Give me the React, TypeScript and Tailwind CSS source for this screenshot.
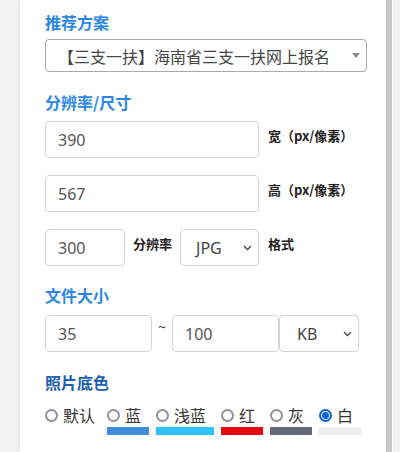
import React from "react";

const cjk = { fontFamily: '"Noto Sans CJK SC", "Noto Sans", sans-serif' };
const num = { fontFamily: '"Noto Sans", "Noto Sans CJK SC", sans-serif' };

function Chevron() {
  return (
    <svg width="9" height="6" viewBox="0 0 9 6" className="shrink-0">
      <path d="M1 1 L4.5 4.5 L8 1" fill="none" stroke="#444" strokeWidth="1.3" />
    </svg>
  );
}

function Input({ value, w }: { value: string; w: string }) {
  return (
    <div
      className={`${w} h-[37px] shrink-0 rounded-[4px] border border-[#ced4da] bg-white flex items-center pl-[12px] text-[16px] text-[#555]`}
      style={num}
    >
      {value}
    </div>
  );
}

function Sel({ value, w, textPl, chevPr }: { value: string; w: string; textPl: string; chevPr: string }) {
  return (
    <div
      className={`${w} h-[37px] shrink-0 rounded-[4px] border border-[#ced4da] bg-white flex items-center justify-between ${textPl} ${chevPr} text-[16px] text-[#444]`}
      style={num}
    >
      <span>{value}</span>
      <Chevron />
    </div>
  );
}

function Heading({ children, color, mt }: { children: React.ReactNode; color: string; mt: string }) {
  return (
    <div className={`${mt} h-[22px] leading-[22px] text-[16px] font-bold ${color}`} style={cjk}>
      {children}
    </div>
  );
}

function Label({ children }: { children: React.ReactNode }) {
  return (
    <div className="pt-[6px] text-[13px] leading-[18px] font-semibold text-[#222] whitespace-nowrap" style={cjk}>
      {children}
    </div>
  );
}

function Radio({ checked }: { checked?: boolean }) {
  if (checked) {
    return (
      <span className="w-[13px] h-[13px] rounded-full border-[2px] border-[#0b63d8] flex items-center justify-center shrink-0">
        <span className="w-[7px] h-[7px] rounded-full bg-[#0b63d8]" />
      </span>
    );
  }
  return <span className="w-[13px] h-[13px] rounded-full border-[2px] border-[#8f8f9d] shrink-0" />;
}

function ColorItem({ label, w, bar, checked }: { label: string; w: string; bar: string; checked?: boolean }) {
  return (
    <div className={`${w} flex flex-col shrink-0`}>
      <div className="flex items-center h-[24px] gap-[5px]">
        <Radio checked={checked} />
        <span className="text-[16px] leading-[24px] text-[#333]" style={cjk}>
          {label}
        </span>
      </div>
      <div className={`h-[8px] w-full ${bar}`} />
    </div>
  );
}

export default function App() {
  return (
    <div className="w-[400px] h-[452px] bg-[#f4f4f4] flex overflow-hidden">
      <div className="w-[20px] shrink-0" />
      <div className="w-[366px] shrink-0 bg-white shadow-[-2px_0_3px_rgba(0,0,0,0.06)] pl-[25px] pr-[19px] pt-[11px]">
        <Heading color="text-[#2b87e3]" mt="mt-0">推荐方案</Heading>
        <div
          className="mt-[6px] h-[33px] rounded-[4px] border border-[#aaaaaa] flex items-center justify-between pl-[12px] pr-[6px] text-[16px] text-[#444]"
          style={cjk}
        >
          <span className="whitespace-nowrap">【三支一扶】海南省三支一扶网上报名</span>
          <svg width="8" height="5" viewBox="0 0 8 5">
            <path d="M0 0 L8 0 L4 5 Z" fill="#888" />
          </svg>
        </div>

        <Heading color="text-[#2b87e3]" mt="mt-[19px]">分辨率/尺寸</Heading>
        <div className="mt-[8px] flex gap-[9px]">
          <Input value="390" w="w-[214px]" />
          <Label>宽（px/像素）</Label>
        </div>
        <div className="mt-[17px] flex gap-[9px]">
          <Input value="567" w="w-[214px]" />
          <Label>高（px/像素）</Label>
        </div>
        <div className="mt-[17px] flex">
          <Input value="300" w="w-[80px]" />
          <div className="ml-[8px]">
            <Label>分辨率</Label>
          </div>
          <div className="ml-[8px]">
            <Sel value="JPG" w="w-[79px]" textPl="pl-[15px]" chevPr="pr-[6px]" />
          </div>
          <div className="ml-[9px]">
            <Label>格式</Label>
          </div>
        </div>

        <Heading color="text-[#2b87e3]" mt="mt-[18px]">文件大小</Heading>
        <div className="mt-[9px] flex">
          <Input value="35" w="w-[107px]" />
          <div className="w-[20px] text-center text-[14px] leading-[20px] text-[#444] pt-[2px]" style={num}>
            ~
          </div>
          <Input value="100" w="w-[107px]" />
          <Sel value="KB" w="w-[80px]" textPl="pl-[17px]" chevPr="pr-[6px]" />
        </div>

        <Heading color="text-[#1a5fb0]" mt="mt-[19px]">照片底色</Heading>
        <div className="mt-[10px] flex">
          <ColorItem label="默认" w="w-[50px]" bar="bg-transparent" />
          <div className="w-[12px]" />
          <ColorItem label="蓝" w="w-[42px]" bar="bg-[#438edb]" />
          <div className="w-[7px]" />
          <ColorItem label="浅蓝" w="w-[58px]" bar="bg-[#2ec3fd]" />
          <div className="w-[7px]" />
          <ColorItem label="红" w="w-[42px]" bar="bg-[#e60912]" />
          <div className="w-[7px]" />
          <ColorItem label="灰" w="w-[42px]" bar="bg-[#666b7c]" />
          <div className="w-[7px]" />
          <ColorItem label="白" w="w-[42px]" bar="bg-[#eeeeee]" checked />
        </div>
      </div>
      <div className="w-[6px] shrink-0 bg-[#c8c8c8]" />
      <div className="w-[1px] shrink-0 bg-white" />
      <div className="flex-1 bg-[#f0f0f0]" />
    </div>
  );
}
